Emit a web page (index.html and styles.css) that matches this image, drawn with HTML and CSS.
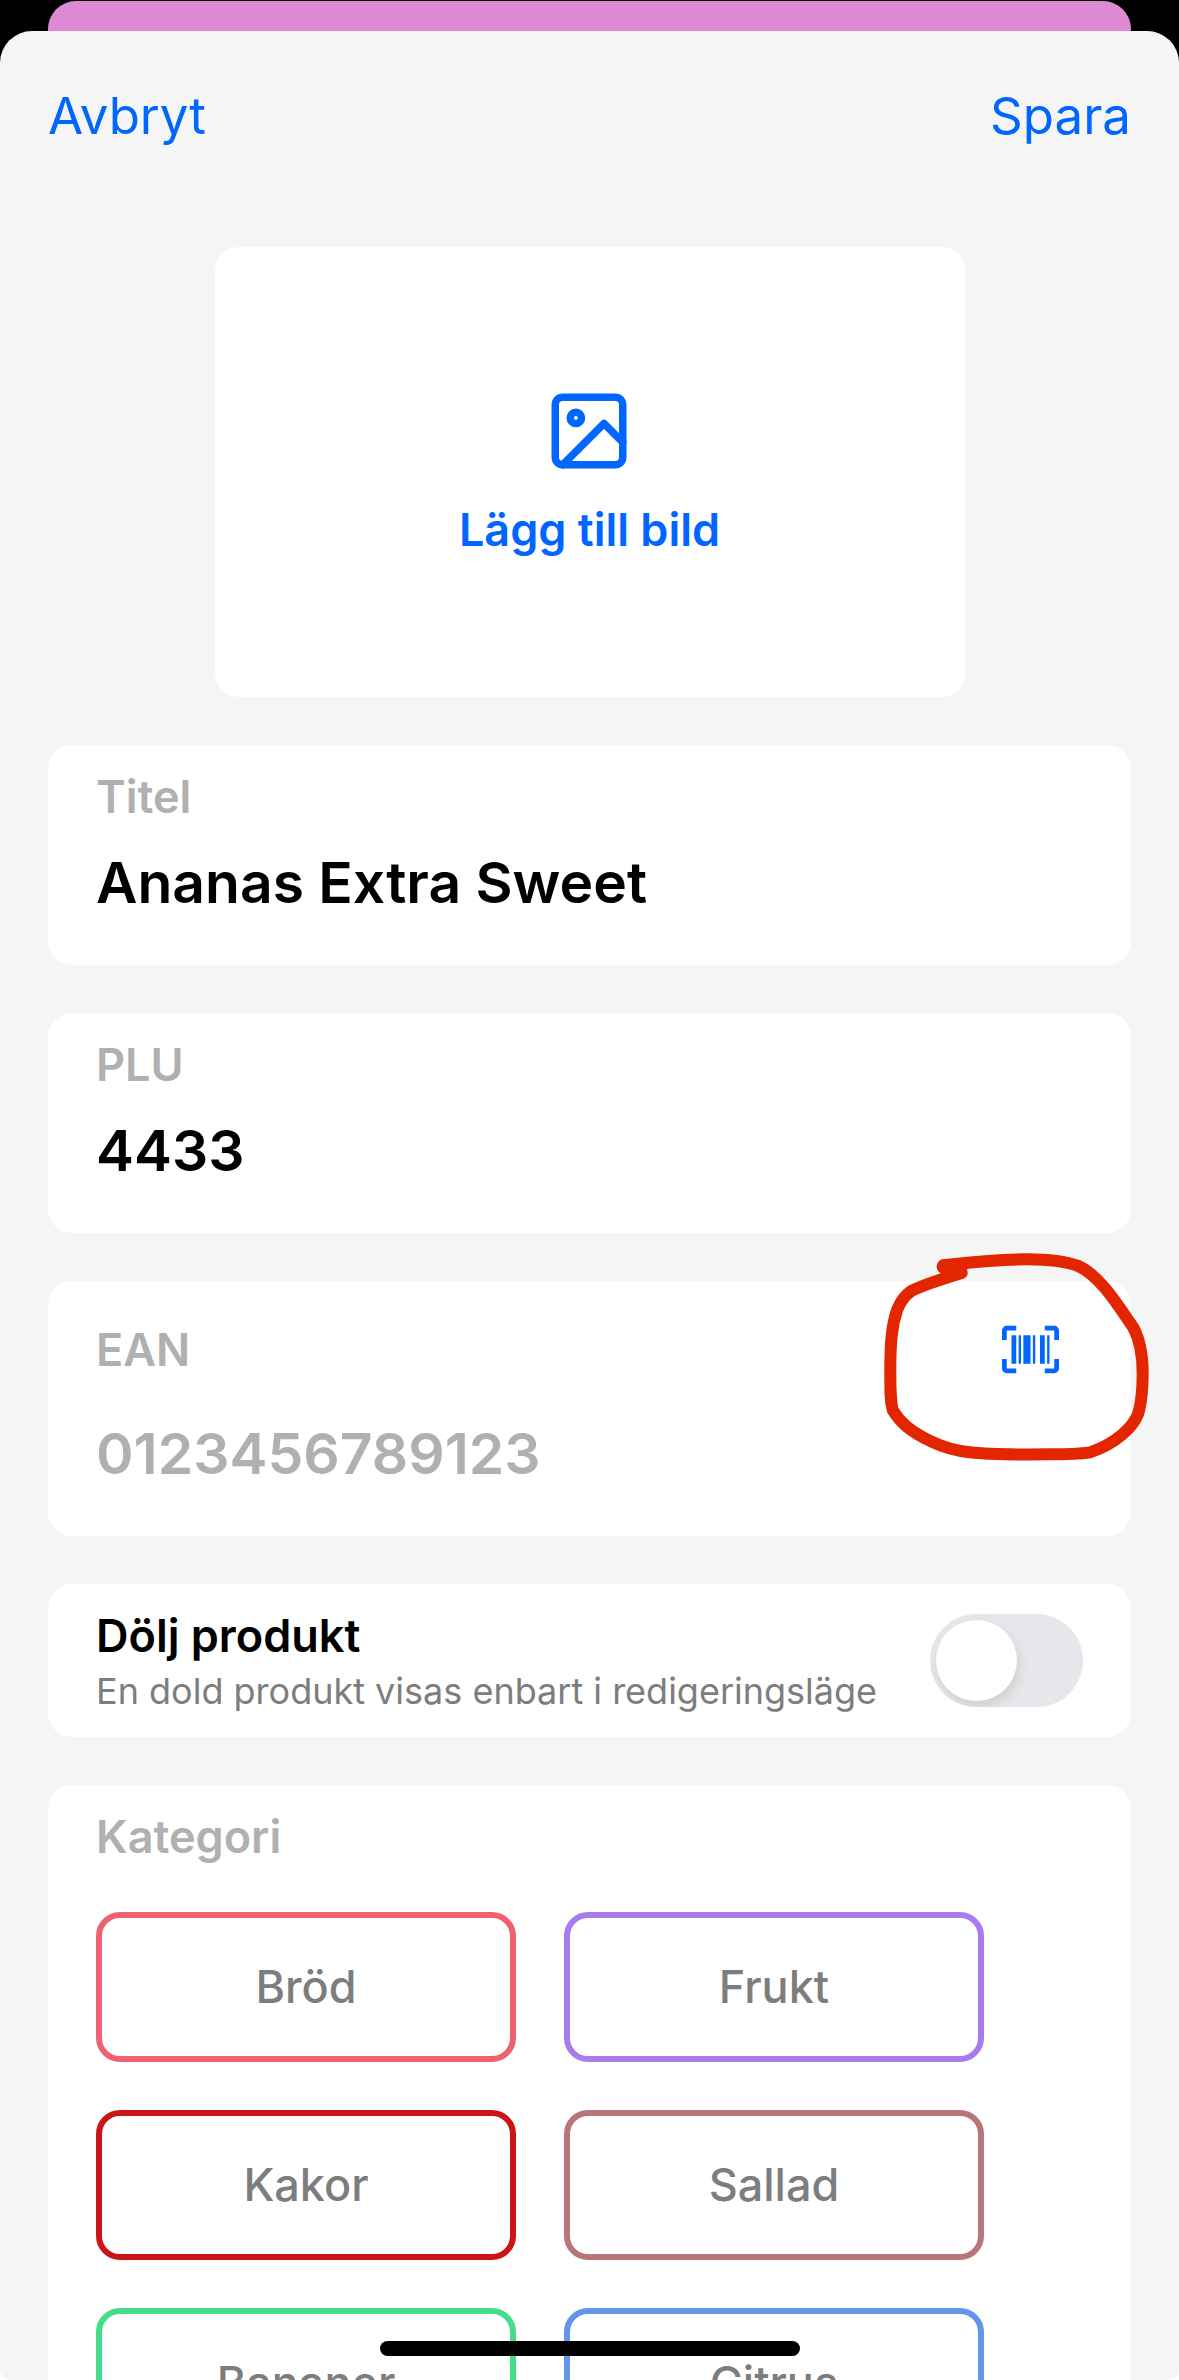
FILE: index.html
```html
<!DOCTYPE html>
<html lang="sv">
<head>
  <meta charset="UTF-8" />
  <meta name="viewport" content="width=device-width, initial-scale=1" />
  <title>Redigera produkt</title>
  <link rel="stylesheet" href="styles.css">
</head>
<body>
  <div class="backdrop"></div>

  <main class="sheet">
    <header class="toolbar">
      <a class="action" href="#">Avbryt</a>
      <a class="action" href="#">Spara</a>
    </header>

    <div class="image-picker">
      <svg class="image-icon" viewBox="0 0 24 24" fill="none" stroke="currentColor" stroke-width="2" stroke-linecap="round" stroke-linejoin="round">
        <rect x="3" y="3" width="18" height="18" rx="2" />
        <circle cx="8.5" cy="8.5" r="1.5" />
        <polyline points="21 15 16 10 5 21" />
      </svg>
      <span>Lägg till bild</span>
    </div>

    <section class="card field">
      <div class="label">Titel</div>
      <div class="value">Ananas Extra Sweet</div>
    </section>

    <section class="card field">
      <div class="label">PLU</div>
      <div class="value">4433</div>
    </section>

    <section class="card field ean">
      <div class="label-row">
        <div class="label">EAN</div>
        <svg class="scan-icon" viewBox="0 0 24 24" fill="currentColor">
          <path d="M4,6H6V18H4V6M7,6H8V18H7V6M9,6H12V18H9V6M13,6H14V18H13V6M16,6H18V18H16V6M19,6H20V18H19V6M2,4V8H0V4A2,2 0 0,1 2,2H6V4H2M22,2A2,2 0 0,1 24,4V8H22V4H18V2H22M2,16V20H6V22H2A2,2 0 0,1 0,20V16H2M22,20V16H24V20A2,2 0 0,1 22,22H18V20H22Z" />
        </svg>
      </div>
      <div class="value placeholder">0123456789123</div>
      <!-- red marker ring round the scan button -->
      <svg class="marker" viewBox="0 0 900 720" fill="none" stroke="#e32500" stroke-width="36" stroke-linecap="round" stroke-linejoin="round">
        <path d="M250,106 C330,97 400,88 490,88 C560,87 610,92 655,108 C720,138 770,220 820,293 C840,330 848,370 848,430 C848,480 845,515 835,550 C820,590 770,640 690,667 C650,673 600,673 570,673 C480,674 400,675 330,667 C280,662 250,652 215,635 C150,604 120,577 98,540 C90,510 91,480 91,400 C92,340 94,290 112,238 C122,214 136,195 154,183 C180,168 230,152 305,129" />
        <path d="M252,110 L300,116" stroke-width="44" />
      </svg>
    </section>

    <section class="card switch-row">
      <div class="switch-text">
        <div class="switch-title">Dölj produkt</div>
        <div class="switch-hint">En dold produkt visas enbart i redigeringsläge</div>
      </div>
      <div class="switch"><div class="knob"></div></div>
    </section>

    <section class="card category">
      <div class="label">Kategori</div>
      <div class="chips">
        <div class="chip pink">Bröd</div>
        <div class="chip purple">Frukt</div>
        <div class="chip red">Kakor</div>
        <div class="chip brown">Sallad</div>
        <div class="chip green">Bananer</div>
        <div class="chip blue">Citrus</div>
      </div>
    </section>
  </main>

  <div class="home-indicator"></div>
</body>
</html>
```

FILE: styles.css
```css
* {
  box-sizing: border-box;
}

body {
  margin: 0;
  height: 2380px;
  overflow: hidden;
  position: relative;
  padding-top: 1px;
  background: linear-gradient(#000 50%, #fff 50%);
  font-family: Inter, 'Liberation Sans', sans-serif;
  color: #000;
}

/* edge of the page behind the sheet */
.backdrop {
  height: 30px;
  margin: 0 48px;
  background: #db8ad3;
  border-radius: 28px 28px 0 0;
}

.sheet {
  height: 2349px;
  overflow: hidden;
  display: flex;
  flex-direction: column;
  gap: 48px;
  padding: 0 48px;
  background: #f5f5f5;
  border-radius: 32px 32px 10px 10px;
}

.toolbar {
  display: flex;
  justify-content: space-between;
  height: 168px;
  padding-top: 53px;
  flex-shrink: 0;
}

.action {
  font-size: 51px;
  line-height: 63px;
  color: #06f;
  text-decoration: none;
}

.image-picker {
  width: 750px;
  height: 450px;
  flex-shrink: 0;
  align-self: center;
  display: flex;
  flex-direction: column;
  align-items: center;
  justify-content: center;
  gap: 26px;
  background: #fff;
  border-radius: 24px;
  color: #06f;
  font-size: 45px;
  font-weight: 600;
  line-height: 54px;
}

.image-icon {
  width: 90px;
  height: 90px;
  margin: -1px 1px 1px 0;
}

.card {
  flex-shrink: 0;
  padding: 25px 48px 48px;
  background: #fff;
  border-radius: 24px;
}

.field {
  display: flex;
  flex-direction: column;
  gap: 24px;
}

.label {
  font-size: 45px;
  font-weight: 600;
  line-height: 54px;
  color: #b0b0b0;
}

.value {
  font-size: 57px;
  font-weight: 600;
  line-height: 69px;
}

.placeholder {
  color: #b0b0b0;
}

.ean {
  position: relative;
  padding-top: 24px;
}

.label-row {
  display: flex;
  align-items: center;
  justify-content: space-between;
  height: 90px;
  padding-right: 24px;
}

.scan-icon {
  width: 57px;
  height: 57px;
  margin-bottom: 1px;
  color: #06f;
}

.marker {
  position: absolute;
  top: -51px;
  left: 812px;
  width: 300px;
  height: 240px;
}

.switch-row {
  display: flex;
  align-items: center;
  justify-content: space-between;
  padding-bottom: 24px;
}

.switch-text {
  display: flex;
  flex-direction: column;
  gap: 6px;
}

.switch-title {
  font-size: 45px;
  font-weight: 600;
  line-height: 54px;
}

.switch-hint {
  font-size: 36px;
  line-height: 44px;
  color: #7d7d7d;
  white-space: nowrap;
}

.switch {
  width: 153px;
  height: 93px;
  margin-bottom: 2px;
  padding: 6px;
  overflow: hidden;
  border-radius: 47px;
  background: #e5e7eb;
}

.knob {
  width: 81px;
  height: 81px;
  border-radius: 50%;
  background: #fff;
  box-shadow: 2px 6px 8px 1px rgba(205, 195, 190, 0.6);
}

.category {
  height: 700px;
}

.chips {
  display: grid;
  grid-template-columns: 420px 420px;
  gap: 48px;
  margin-top: 48px;
}

.chip {
  height: 150px;
  display: flex;
  align-items: center;
  justify-content: center;
  border: 6px solid;
  border-radius: 24px;
  font-size: 45px;
  font-weight: 500;
  line-height: 54px;
  color: #7d7d7d;
}

.pink { border-color: #ef6170; }
.purple { border-color: #a87bee; }
.red { border-color: #ca1517; }
.brown { border-color: #b77778; }
.green { border-color: #44dd88; }
.blue { border-color: #6495ed; }

.home-indicator {
  position: absolute;
  left: 380px;
  bottom: 24px;
  width: 420px;
  height: 15px;
  border-radius: 8px;
  background: #000;
}
```
